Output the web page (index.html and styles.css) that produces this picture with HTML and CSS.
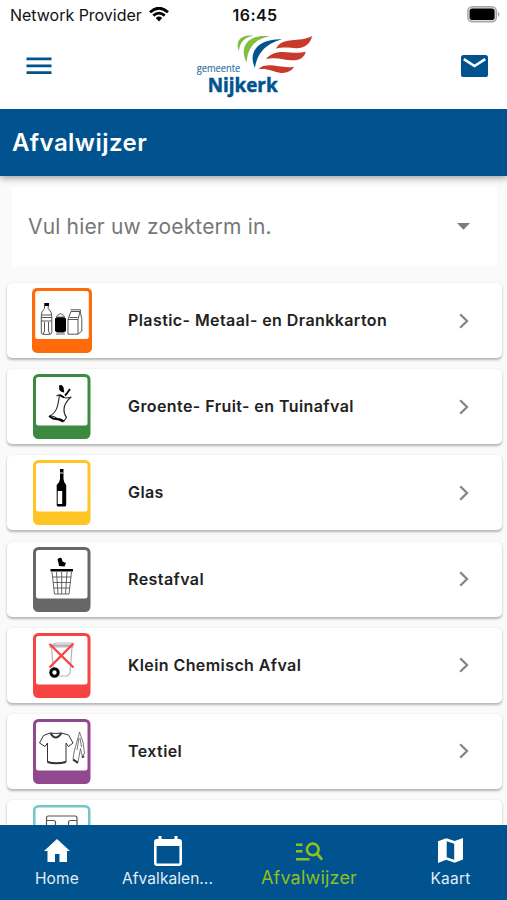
FILE: index.html
```html
<!DOCTYPE html>
<html lang="nl">
<head>
<meta charset="utf-8">
<title>Afvalwijzer</title>
<link rel="stylesheet" href="styles.css">
</head>
<body>
<div class="app">
  <div class="status">
    <div class="carrier"><span>Network Provider</span>
      <svg width="20" height="15" viewBox="0 0 20 15" fill="none" stroke="#000" stroke-width="2.8"><path d="M1 5.2Q10-2.8 19 5.2M4.3 8.6Q10 3.6 15.7 8.6"/><path d="M6.8 11Q10 8.2 13.2 11L10 14.4Z" fill="#000" stroke="none"/></svg>
    </div>
    <div class="time">16:45</div>
    <svg class="battery" width="33" height="17" viewBox="0 0 33 17"><rect x=".8" y=".8" width="28.6" height="15" rx="4.500" fill="#e0e0e0" stroke="#a5a5a5" stroke-width="1.400"/><rect x="2.600" y="2.600" width="25" height="11.400" rx="2.800"/><path d="M31 5.500Q34 8.300 31 11Z" fill="#aaa"/></svg>
  </div>
  <header class="header">
    <svg width="26" height="18" viewBox="0 0 26 18" fill="#00538f"><path d="M.5.5h25v2.800H.5zM.5 7.400h25v2.800H.5zM.5 14.200h25V17H.5z"/></svg>
    <svg class="logo" width="140" height="75" viewBox="0 0 420 225">
      <path fill="#83bd41" d="M162 69C150 43 164 18 206 23C178 28 164 42 162 69Z"/>
      <path fill="#83bd41" d="M185 103C163 65 180 15 256 25C211 32 188 58 185 103Z"/>
      <path fill="#00538f" d="M210 120C188 75 216 32 291 34C239 49 217 77 210 120Z"/>
      <path fill="#c93a2b" d="M273 62C294 23 342 46 381 24C378 45 358 62 334 61C313 59 296 56 273 62Z"/>
      <path fill="#c93a2b" d="M243 93C277 54 321 83 362 71C360 86 344 98 322 97C292 95 276 86 243 93Z"/>
      <path fill="#c93a2b" d="M220 124C247 98 288 124 327 116C319 130 302 137 284 134C262 131 248 120 220 124Z"/>
      <text x="35" y="131" textLength="131" lengthAdjust="spacingAndGlyphs" class="logo-small">gemeente</text>
      <text x="68" y="193" textLength="210" lengthAdjust="spacingAndGlyphs" class="logo-big">Nijkerk</text>
    </svg>
    <svg width="27" height="22" viewBox="0 0 27 22"><rect width="27" height="22" rx="2.600" fill="#00538f"/><path d="M2.800 4.200 13.500 11 24.200 4.200" fill="none" stroke="#fff" stroke-width="2.600"/></svg>
  </header>
  <div class="title"><h1>Afvalwijzer</h1></div>
  <main class="content">
    <div class="search"><span>Vul hier uw zoekterm in.</span><svg width="13" height="7" viewBox="0 0 13 7"><path d="M0 0h13L6.500 6.800z" fill="#7d7d7d"/></svg></div>
    <ul class="list">
      <li class="card">
        <svg class="bin" viewBox="0 0 60 65"><rect width="60" height="65" rx="5" fill="#ff6b0b"/><rect x="3.200" y="3" width="53.600" height="48" rx="2.500" fill="#fff"/>
          <g fill="none" stroke="#444" stroke-width=".9"><path d="M12.500 17.500v3Q9 24 9.300 28v16q0 2 2 2.400h6.500q2-.4 2-2.400V28q.3-4-3.600-7.500v-3M9.300 27h10.500M9.300 29.500h10.500M9.300 33h10.500M12.500 34v9l-1.500 3.400M16.500 34v9l1.500 3.400"/><path d="M36 31.500 39 23.500h9l1.800 7v12.500L46 46.200H36zM36 31.500h10l2-8M46 31.500v14.700M37.500 29.500h8M38.500 21.800h10v1.700"/></g><path d="M12.300 15h4.800v3h-4.800zM23 30.500l2-1.500h7l2 1.500V43l-2 1.500h-7L23 43z"/><path d="M24.500 29q0-2 4-3.300 4 1.300 4 3.300zM24 46h9" fill="none" stroke="#666"/></svg>
        <span class="name">Plastic- Metaal- en Drankkarton</span><svg class="chev" viewBox="0 0 10 16"><path d="m1.200 1.200 6.800 6.800-6.800 6.800"/></svg>
      </li>
      <li class="card">
        <svg class="bin" viewBox="0 0 60 65"><rect x="1" width="57.500" height="65" rx="5.500" fill="#3b8a40"/><rect x="4" y="3" width="51.500" height="48.500" rx="2.500" fill="#fff"/>
          <path d="M27 11.500q3-1.500 4.500 2l.8 5q-3.500 0-5-3z"/><path d="M38 15 34.500 20 33 21.500" fill="none" stroke="#000" stroke-width="1.800"/><path d="M27.500 20.500q2 3 6 3.500 3 0 6-1M39 23q-6.500 5.500-7 12-.5 4 2.500 8.500l-2.500 3.500q-3-3-7-2.500-3-3-7-2.500 6-3.500 7.500-10 1.500-6 2-11.500M27.500 20.500l-3 1.500" fill="none" stroke="#222" stroke-width="1.100"/><path d="M17 42l4 2.500 6 1 4.500 2M28 21l4 2.500" fill="none" stroke="#000" stroke-width="2"/></svg>
        <span class="name">Groente- Fruit- en Tuinafval</span><svg class="chev" viewBox="0 0 10 16"><path d="m1.200 1.200 6.800 6.800-6.800 6.800"/></svg>
      </li>
      <li class="card">
        <svg class="bin" viewBox="0 0 60 65"><rect x="1" width="57.500" height="65" rx="5.500" fill="#ffc524"/><rect x="4" y="3" width="51.500" height="48.500" rx="2.500" fill="#fff"/>
          <path d="M28 9h3.500v10q0 3 2.700 6v20q0 1.500-1.500 1.500h-6.500q-1.500 0-1.500-1.500V25q3.300-3 3.300-6z"/><path d="M28 13h3.500" stroke="#fff" stroke-width=".9"/><path d="M25.700 31h4.500v13h-4.500z" fill="#fff"/></svg>
        <span class="name">Glas</span><svg class="chev" viewBox="0 0 10 16"><path d="m1.200 1.200 6.800 6.800-6.800 6.800"/></svg>
      </li>
      <li class="card">
        <svg class="bin" viewBox="0 0 60 65"><rect x="1" width="57.500" height="65" rx="5.500" fill="#67676a"/><rect x="4" y="3" width="51.500" height="48.500" rx="2.500" fill="#fff"/>
          <path d="M18.500 22h22.500v2.600H18.500zM25.500 12.500q1.500-2.500 4-1.500l1 3.500 3.500 1.500-1.500 3.500-5.500-.5-.5-3z"/><path d="m20 25 2.500 22h14.500l2.500-22M24.500 25l1.500 22M29.700 25v22M35 25l-1.500 22M20.500 30h18.700M21 35.500h17.500M21.500 41h16.500" fill="none" stroke="#555" stroke-width=".9"/></svg>
        <span class="name">Restafval</span><svg class="chev" viewBox="0 0 10 16"><path d="m1.200 1.200 6.800 6.800-6.800 6.800"/></svg>
      </li>
      <li class="card">
        <svg class="bin" viewBox="0 0 60 65"><rect x="1" width="57.500" height="65" rx="5.500" fill="#f84343"/><rect x="4" y="3" width="51.500" height="48.500" rx="2.500" fill="#fff"/>
          <path d="m19.500 14 2 24M40 14l-2 26.500-3 2.500h-8M18 14q4-4 8-4h13l2 4z" fill="none" stroke="#b5b5b5" stroke-width="1.200"/><path d="M20 12.500h20" stroke="#aaa" stroke-width="2"/><circle cx="22.500" cy="39.500" r="3.700" fill="#fff" stroke="#000" stroke-width="3"/><path d="m17.500 11 24 23.500M41.500 10.500l-24 24" stroke="#f84343" stroke-width="2.400"/></svg>
        <span class="name">Klein Chemisch Afval</span><svg class="chev" viewBox="0 0 10 16"><path d="m1.200 1.200 6.800 6.800-6.800 6.800"/></svg>
      </li>
      <li class="card">
        <svg class="bin" viewBox="0 0 60 65"><rect x="1" width="57.500" height="65" rx="5.500" fill="#91488f"/><rect x="4" y="3" width="51.500" height="48.500" rx="2.500" fill="#fff"/>
          <g fill="none" stroke="#333" stroke-width="1"><path d="m18 14-6.500 2.500-4 7.500 5.500 3.500 2.500-3.500v19q8.500 3 18.500 0v-19l2.500 3.500 4.500-3.500-4.500-8L29.500 14Q24 15 18 14z"/><path d="M18.500 14q5 9 11 0" stroke-width="2"/><path d="m47.500 13-1.200 5-3.800 13-1.500 9 5 3 1.500-8 1-5.500 1.500 7 2.500-1.500-1.500-12-2.500-7zM47 19l-2 12M48 19l1.500 9" stroke="#555" stroke-width=".8"/><path d="m41 40.500 5 3.500M50 38.500l2-1.500M15.500 43q8 2.500 18.500 0" stroke-width="2"/></g></svg>
        <span class="name">Textiel</span><svg class="chev" viewBox="0 0 10 16"><path d="m1.200 1.200 6.800 6.800-6.800 6.800"/></svg>
      </li>
      <li class="card">
        <svg class="bin" viewBox="0 0 60 65"><rect x="1" width="57.500" height="65" rx="5.500" fill="#70c7c4"/><rect x="3.500" y="2.500" width="52.500" height="49" rx="3" fill="#fff"/>
          <path d="M14.500 25V13q0-2 2-2H43q2 0 2 2v12M14.500 15.500h7q2 0 2 2v6M45 15.500h-6.500q-2 0-2 2v6" fill="none" stroke="#555" stroke-width="1.200"/></svg>
      </li>
    </ul>
  </main>
  <nav class="nav">
    <a class="tab"><svg width="26" height="24" viewBox="0 0 26 24"><path d="M13 0 0 12h3.500v11H11v-8h4.500v8H23V12h3z" fill="#fff"/></svg><span>Home</span></a>
    <a class="tab tab-cal"><svg width="28" height="31" viewBox="0 0 28 31"><path fill="#fff" fill-rule="evenodd" d="M4.500 0h3v3h13V0h3v3H25q3 0 3 3v21q0 3-3 3H3q-3 0-3-3V6q0-3 3-3h1.500zM2.600 10v17.500h22.800V10z"/></svg><span>Afvalkalen...</span></a>
    <a class="tab active"><svg width="27" height="19" viewBox="0 0 27 19" fill="none" stroke="#8fbf21"><path d="M0 2.700h6.500M0 9.300h6.500M0 17.300h13.500" stroke-width="2.600"/><circle cx="16.800" cy="7.400" r="5.800" stroke-width="2.600"/><path d="m20.900 11.500 5.200 6" stroke-width="2.800"/></svg><span>Afvalwijzer</span></a>
    <a class="tab tab-map"><svg width="25" height="25" viewBox="0 0 25 25"><path fill="#fff" fill-rule="evenodd" d="M0 3.200 8.200.3l8.500 2.800L25 0v21.500L16.700 24.700 8.200 21.700 0 25zM8.700 3.300v16l7.500 2.500v-16z"/></svg><span>Kaart</span></a>
  </nav>
</div>
</body>
</html>
```
FILE: styles.css
```css
* { box-sizing: border-box; }
body { margin: 0; font-family: Inter, "Liberation Sans", sans-serif; color: #222; }
svg { display: block; flex: none; }
.app { width: 507px; height: 900px; display: flex; flex-direction: column; overflow: hidden; background: #fafafa; }
.status { height: 30px; flex: none; background: #fff; display: grid; grid-template-columns: 1fr 46px 1fr; align-items: center; padding: 0 7px 0 10px; color: #111; }
.carrier { display: flex; align-items: center; gap: 7px; font-size: 16px; letter-spacing: -.02px; white-space: nowrap; }
.carrier svg { margin-bottom: 1px; }
.time { font-size: 16px; font-weight: 600; letter-spacing: .4px; text-align: center; }
.battery { justify-self: end; margin-bottom: 2px; }
.header { height: 79px; flex: none; background: #fff; display: flex; justify-content: space-between; align-items: center; padding: 0 19px 7px 26px; }
.logo { margin-right: 4px; margin-bottom: 2px; }
.logo-small { font: 31px "Open Sans", sans-serif; fill: #3877a7; stroke: #3877a7; stroke-width: .6; }
.logo-big { font: 700 58px "Open Sans", sans-serif; fill: #00538f; stroke: #00538f; stroke-width: 1.5; }
.title { height: 67px; flex: none; background: #00538f; display: flex; align-items: center; padding: 0 12px; box-shadow: 0 2px 7px rgba(0,0,0,.38); clip-path: inset(0 0 -12px 0); z-index: 1; }
h1 { margin: 0; color: #fff; font-size: 24px; font-weight: 600; letter-spacing: .45px; }
.content { flex: 1; min-height: 0; overflow: hidden; padding: 11px 5px 0 7px; }
.search { height: 79px; margin: 0 5px 17px; padding: 0 27px 0 16px; background: #fff; display: flex; align-items: center; justify-content: space-between; color: #777; font-size: 21px; letter-spacing: .17px; }
.list { margin: 0; padding: 0; list-style: none; display: flex; flex-direction: column; gap: 11.2px; }
.card { height: 75px; flex: none; display: flex; align-items: center; padding: 0 33px 0 25px; background: #fff; border-radius: 5px; box-shadow: 0 1.5px 2.5px rgba(0,0,0,.28); }
.bin { width: 60px; height: 65px; }
.name { flex: 1; margin-left: 36px; font-size: 16px; font-weight: 600; letter-spacing: .42px; position: relative; top: -.5px; }
.chev { width: 10px; height: 16px; fill: none; stroke: #858585; stroke-width: 2.300; }
.nav { height: 75px; flex: none; background: #00538f; display: grid; grid-template-columns: 114px 107px 176px 107px; color: #e2edf5; z-index: 1; }
.tab { display: flex; flex-direction: column; align-items: center; padding-top: 14px; font-size: 15.5px; letter-spacing: .2px; line-height: 20px; white-space: nowrap; }
.tab span { margin-top: 6px; }
.tab-cal { padding-top: 11px; letter-spacing: .06px; }
.tab-cal span { margin-top: 2px; }
.active { padding-top: 17px; color: #8fbf21; font-size: 18px; letter-spacing: .2px; }
.active span { margin-top: 7px; }
.tab-map { padding-top: 13px; }
```
